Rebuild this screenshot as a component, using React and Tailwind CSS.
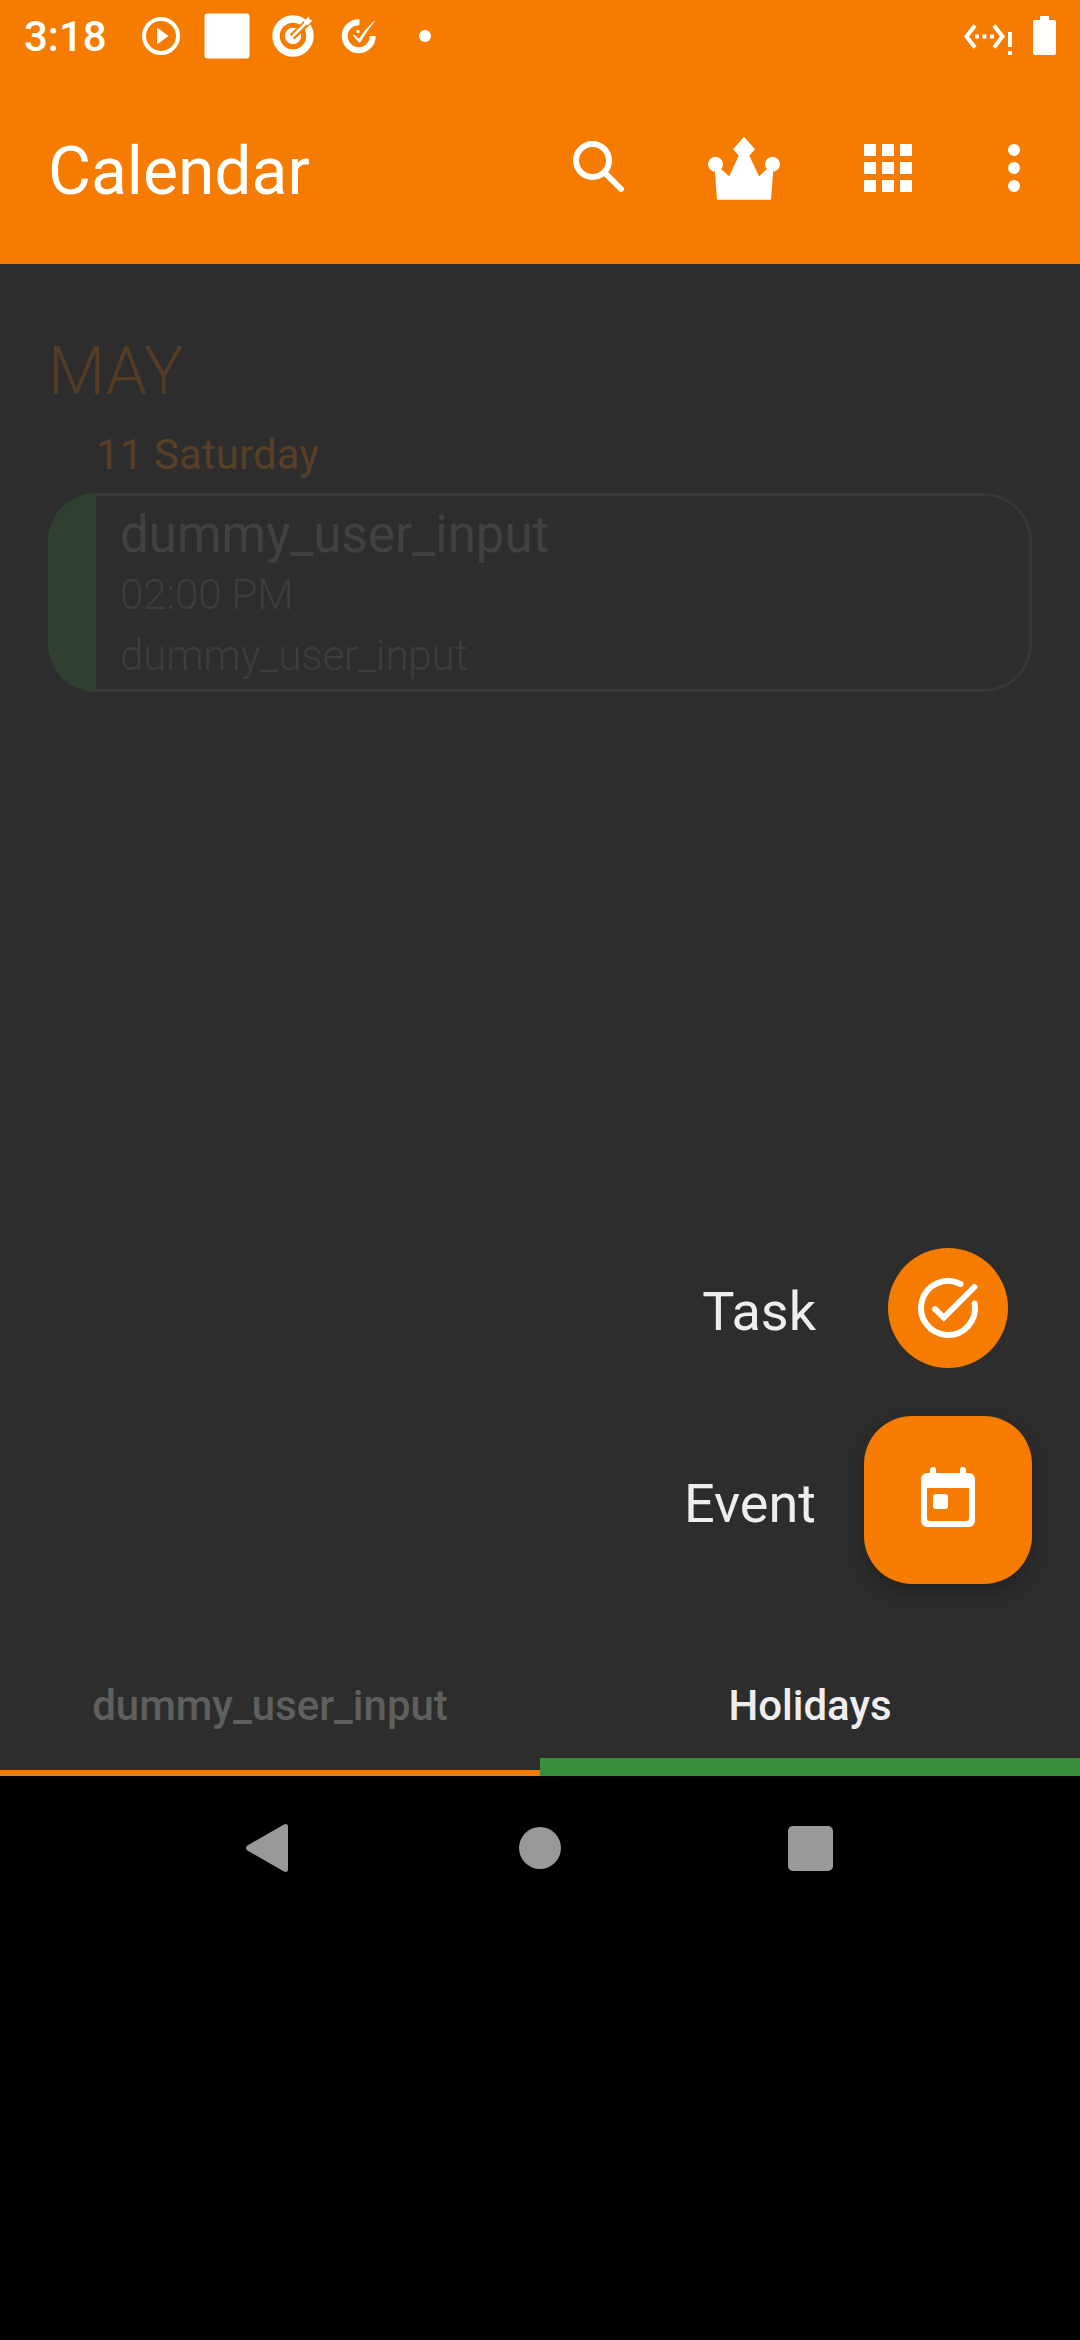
const events = [
  { title: 'dummy_user_input', time: '02:00 PM', note: 'dummy_user_input' },
]

function StatusBar() {
  return (
    <div className="flex h-[72px] items-center pl-6 pr-6 text-white">
      <span className="w-[118px] text-[42px] font-medium leading-[72px] pt-0.5">3:18</span>
      <svg className="h-[72px] w-[306px] shrink-0" viewBox="142 0 306 72" fill="none">
        <circle cx="161" cy="36" r="17" stroke="white" strokeWidth="4" />
        <path d="M157 27.5v17l11.5-8.5z" fill="white" />
        <rect x="204.500" y="13.500" width="45" height="45" rx="3" fill="white" />
        <circle cx="293" cy="36" r="17" stroke="white" strokeWidth="7.4" />
        <circle cx="293" cy="36" r="8.2" fill="white" />
        <path d="M292 37 L313 17" stroke="#f57c00" strokeWidth="7" />
        <path d="M292.500 36.500 L306 23" stroke="white" strokeWidth="2.6" strokeLinecap="round" />
        <path d="M304 25v-4l5-4.500.7 3.300 2.800.7-4.500 4.500z" fill="white" />
        <path d="M359.500 22.200 A14 14 0 1 0 372.700 36" stroke="white" strokeWidth="6" />
        <path d="M353.300 35 Q356.500 36.500 359 39.500 Q364.500 30 374 21.500 Q366 31.500 359.700 42.500 Q356.500 39.500 353.300 35z" fill="white" stroke="white" strokeWidth="1" strokeLinejoin="round" />
        <circle cx="358" cy="31.500" r="1.700" fill="white" />
        <circle cx="425" cy="36" r="6" fill="white" />
      </svg>
      <svg className="ml-auto h-[72px] w-[96px]" viewBox="960 0 96 72" fill="none">
        <path d="M975 25.500 966.500 36.500 975 47.500M994 25.500 1002.500 36.500 994 47.500" stroke="white" strokeWidth="4" />
        <path d="M975 34.500h4v4h-4zM982.500 34.500h4v4h-4zM990 34.500h4v4h-4zM1008 32h4v15h-4zM1008 51h4v4h-4z" fill="white" />
        <path d="M1040 16h9v4h5a2 2 0 0 1 2 2v31a2 2 0 0 1-2 2h-19a2 2 0 0 1-2-2V22a2 2 0 0 1 2-2h5z" fill="white" />
      </svg>
    </div>
  )
}

function SearchIcon() {
  return (
    <svg className="size-[72px]" viewBox="0 0 72 72" fill="none" stroke="white" strokeWidth="6">
      <circle cx="28.500" cy="28.500" r="16.500" />
      <path d="M43 43 57 57" strokeLinecap="round" />
      <path d="M40 40 45 45" strokeWidth="4" />
    </svg>
  )
}

function CrownIcon() {
  return (
    <svg className="size-[72px]" viewBox="708 132 72 72" fill="white">
      <circle cx="715.500" cy="164.300" r="7.500" />
      <circle cx="772.500" cy="164.300" r="7.500" />
      <path d="M744 136.700 754.900 149.300 749.400 155.700 759 176.300 767 169 773.200 171 771 199.700H717L714.800 171 721 169 729.200 176.300 738.700 155.700 733.200 149.300z" />
    </svg>
  )
}

function AppsIcon() {
  return (
    <svg className="size-[72px]" viewBox="0 0 72 72" fill="white">
      <path d="M12 12h12v12H12zM30 12h12v12H30zM48 12h12v12H48zM12 30h12v12H12zM30 30h12v12H30zM48 30h12v12H48zM12 48h12v12H12zM30 48h12v12H30zM48 48h12v12H48z" />
    </svg>
  )
}

function MoreIcon() {
  return (
    <svg className="size-[72px]" viewBox="0 0 72 72" fill="white">
      <circle cx="36" cy="18" r="6" />
      <circle cx="36" cy="36" r="6" />
      <circle cx="36" cy="54" r="6" />
    </svg>
  )
}

function TaskIcon() {
  return (
    <svg className="size-[72px]" viewBox="0 0 24 24" fill="none" stroke="white" strokeWidth="2" strokeLinecap="round">
      <path d="M16.150 4 A9 9 0 1 0 20.880 10.500" />
      <path d="M7.700 12.400 10.600 15.200 20.800 5" strokeLinejoin="miter" />
    </svg>
  )
}

function EventIcon() {
  return (
    <svg className="size-[72px]" viewBox="0 0 24 24" fill="white">
      <path fillRule="evenodd" d="M19 3h-1V2a1 1 0 0 0-2 0v1H8V2a1 1 0 0 0-2 0v1H5a2 2 0 0 0-2 2v14a2 2 0 0 0 2 2h14a2 2 0 0 0 2-2V5a2 2 0 0 0-2-2zM18 19H6a1 1 0 0 1-1-1V8h14v10a1 1 0 0 1-1 1z" />
      <rect x="7" y="10" width="5" height="5" rx="1" />
    </svg>
  )
}

function EventCard({ title, time, note }) {
  return (
    <article className="flex h-[199px] overflow-hidden rounded-[48px] bg-[#373737]">
      <div className="w-12 shrink-0 bg-[#2f3f30]" />
      <div className="my-[3px] mr-[3px] flex-1 rounded-r-[45px] bg-[#2d2d2d] pl-6">
        <h3 className="h-[70px] text-[51px] leading-[77px] text-[#414141]">{title}</h3>
        <p className="h-[61px] text-[42px] font-light leading-[57px] tracking-[-0.12px] text-[#3d3d3d]">{time}</p>
        <p className="text-[42px] font-light leading-[57px] tracking-[-0.12px] text-[#3d3d3d]">{note}</p>
      </div>
    </article>
  )
}

export default function App() {
  return (
    <div className="flex h-[2340px] w-[1080px] flex-col overflow-hidden bg-black font-['Roboto',sans-serif]">
      <header className="h-[264px] bg-[#f57c00]">
        <StatusBar />
        <div className="flex h-[192px] items-start pl-12 pr-[30px] pt-[60px]">
          <h1 className="text-[66px] leading-[79px] text-white">Calendar</h1>
          <div className="ml-auto flex gap-[72px]">
            <SearchIcon />
            <CrownIcon />
            <AppsIcon />
            <div className="-ml-[18px]">
              <MoreIcon />
            </div>
          </div>
        </div>
      </header>

      <main className="flex h-[1512px] flex-col bg-[#2d2d2d]">
        <section className="px-12 pt-[66px]">
          <h2 className="h-[98px] text-[66px] font-light leading-[83px] text-[#543c26]">MAY</h2>
          <p className="h-[65px] pl-12 text-[42px] leading-[53px] tracking-[0.1px] text-[#573f28]">11 Saturday</p>
          {events.map((e) => (
            <EventCard key={e.title} {...e} />
          ))}
        </section>

        <section className="mt-auto flex flex-col items-end gap-12 pr-12 text-[54px] text-[#eeeeee]">
          <div className="flex items-center gap-[72px] pr-6">
            <span className="pt-1.5">Task</span>
            <div className="flex size-[120px] items-center justify-center rounded-full bg-[#f57c00]">
              <TaskIcon />
            </div>
          </div>
          <div className="flex items-center gap-12">
            <span className="pt-1.5">Event</span>
            <div className="flex size-[168px] items-center justify-center rounded-[48px] bg-[#f57c00] shadow-[0_8px_20px_rgba(0,0,0,0.25)]">
              <EventIcon />
            </div>
          </div>
        </section>

        <nav className="mt-[48px] grid h-[144px] grid-cols-2 text-center text-[42px] font-medium leading-[49px]">
          <div className="border-b-[6px] border-[#f57c00] pt-[49px] text-[#5f5f5f]">dummy_user_input</div>
          <div className="border-b-[18px] border-[#388e3c] pt-[49px] text-[#eeeeee]">Holidays</div>
        </nav>
      </main>

      <footer className="grid h-[144px] grid-cols-[1fr_252px_1fr] items-center">
        <svg className="ml-auto mr-[126px] h-12 w-[42px]" viewBox="0 0 42 48" fill="#999999">
          <path d="M1.500 21.500 38 .5Q42-1 42 3V45Q42 49 38 47.500L1.500 26.500Q-1.500 24 1.500 21.500z" />
        </svg>
        <div className="mx-auto size-[42px] rounded-full bg-[#999999]" />
        <div className="ml-[121.5px] size-[45px] rounded-[5px] bg-[#999999]" />
      </footer>
    </div>
  )
}
